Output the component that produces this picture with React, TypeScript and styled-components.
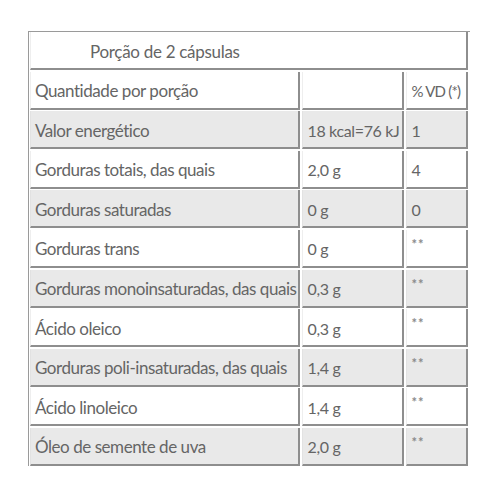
import React from "react";
import styled, { createGlobalStyle } from "styled-components";

const Global = createGlobalStyle`
  html, body { margin: 0; padding: 0; background: #ffffff; }
  body { width: 500px; height: 499px; overflow: hidden; }
`;

const Page = styled.div`
  padding: 31px 0 0 28px;
`;

const Table = styled.div`
  display: grid;
  width: max-content;
  grid-template-columns: 270px 102.5px 62px;
  grid-auto-rows: 38px;
  column-gap: 1.5px;
  row-gap: 1.6px;
  padding: 0 2px 0 1px;
  border-left: 1.5px solid #9a9a9a;
  border-top: 1.5px solid #9a9a9a;
  font-family: Lato, "Open Sans", "Liberation Sans", sans-serif;
  color: #656565;
`;

const Cell = styled.div<{ $shade?: boolean; $span?: number; $indent?: number; $size?: number; $track?: number }>`
  box-sizing: border-box;
  grid-column: span ${(p) => p.$span ?? 1};
  display: flex;
  align-items: center;
  padding: 2px 0 0 ${(p) => p.$indent ?? 5}px;
  background: ${(p) => (p.$shade ? "#e9e9e9" : "#ffffff")};
  border-right: 2px solid #8e8e8e;
  border-bottom: 2px solid #8e8e8e;
  border-left: 1px solid ${(p) => (p.$shade ? "#e2e2e2" : "#eeeeee")};
  font-size: ${(p) => p.$size ?? 16}px;
  letter-spacing: ${(p) => p.$track ?? -0.3}px;
  white-space: nowrap;
  overflow: hidden;
`;

const Stars = styled.span`
  align-self: flex-start;
  margin-top: 4px;
  font-size: 13px;
  font-weight: 700;
  letter-spacing: 1px;
  color: #8a8a8a;
`;

type Row = { label: string; amount: string; vd: string };

const rows: Row[] = [
  { label: "Valor energético", amount: "18 kcal=76 kJ", vd: "1" },
  { label: "Gorduras totais, das quais", amount: "2,0 g", vd: "4" },
  { label: "Gorduras saturadas", amount: "0 g", vd: "0" },
  { label: "Gorduras trans", amount: "0 g", vd: "**" },
  { label: "Gorduras monoinsaturadas, das quais", amount: "0,3 g", vd: "**" },
  { label: "Ácido oleico", amount: "0,3 g", vd: "**" },
  { label: "Gorduras poli-insaturadas, das quais", amount: "1,4 g", vd: "**" },
  { label: "Ácido linoleico", amount: "1,4 g", vd: "**" },
  { label: "Óleo de semente de uva", amount: "2,0 g", vd: "**" },
];

export default function App() {
  return (
    <>
      <Global />
      <Page>
        <Table>
          <Cell $span={3} $indent={59} $size={17}>Porção de 2 cápsulas</Cell>
          <Cell $size={17} $indent={4} $track={-0.45}>Quantidade por porção</Cell>
          <Cell />
          <Cell $size={15} $track={-0.8}>% VD (*)</Cell>
          {rows.map((r, i) => {
            const shade = i % 2 === 0;
            return (
              <React.Fragment key={r.label}>
                <Cell $shade={shade} $size={17} $indent={4} $track={-0.45}>{r.label}</Cell>
                <Cell $shade={shade} $size={16} $track={-0.35}>{r.amount}</Cell>
                <Cell $shade={shade}>
                  {r.vd === "**" ? <Stars>**</Stars> : r.vd}
                </Cell>
              </React.Fragment>
            );
          })}
        </Table>
      </Page>
    </>
  );
}
